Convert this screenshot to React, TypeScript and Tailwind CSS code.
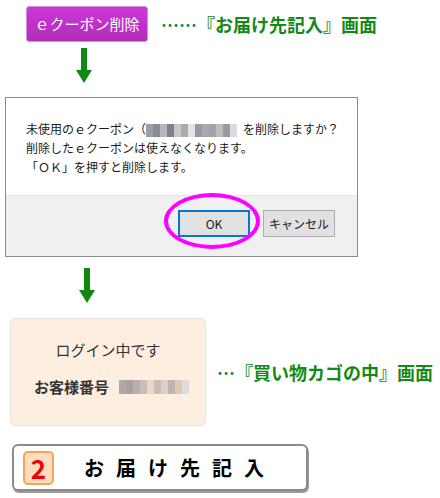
const jp = "font-['Noto_Sans_CJK_JP','Noto_Sans',sans-serif]";

const DownArrow: React.FC<{ className?: string }> = ({ className }) => (
  <svg width="16" height="35" viewBox="0 0 16 35" className={className}>
    <rect x="5" y="0" width="6" height="23" fill="#0f8a0f" />
    <polygon points="0,22 16,22 8,35" fill="#0f8a0f" />
  </svg>
);

const Blur: React.FC<{ colors: string[]; className?: string }> = ({ colors, className }) => (
  <span className={"inline-flex h-[13px] align-middle " + (className ?? "")}>
    {colors.map((c, i) => (
      <span key={i} className="h-full w-[7px]" style={{ background: c }} />
    ))}
  </span>
);

const CouponRow: React.FC = () => (
  <div className="flex items-center pl-[26px] pt-[6px]">
    <div className="flex h-[36px] w-[122px] items-center justify-center rounded-[3px] border border-[#d38fd8] bg-gradient-to-b from-[#cc38d8] to-[#b22cb8] text-[15px] text-white">
      ｅクーポン削除
    </div>
    <div className="ml-[13px] text-[18px] font-bold text-[#138a13]">……『お届け先記入』画面</div>
  </div>
);

const ConfirmDialog: React.FC = () => (
  <div className="ml-[5px] w-[353px] border border-[#8c8c8c] bg-white text-[12px] leading-[19px] text-[#1a1a1a]">
    <div className="h-[97px] pl-[20px] pt-[21px]">
      <p>
        未使用のｅクーポン（
        <Blur
          className="mr-[6px]"
          colors={["#9aa0a8", "#8a8c94", "#b4b8bc", "#7c8088", "#c8c8c8", "#a8acb0", "#e4e4e4", "#9a9aa6", "#b0a8a8", "#a0a4b0", "#c0bcbc", "#9c989c", "#d8dce4"]}
        />
        を削除しますか？
      </p>
      <p>削除したｅクーポンは使えなくなります。</p>
      <p>「ＯＫ」を押すと削除します。</p>
    </div>
    <div className="flex h-[61px] justify-end gap-[13px] border-t border-[#e6e6e6] bg-[#f0f0f0] pr-[22px] pt-[14px]">
      <div className="relative">
        <div className="flex h-[27px] w-[72px] items-center justify-center border-2 border-[#0078d7] bg-[#e1e1e1] text-[12px]">
          OK
        </div>
        <div className="pointer-events-none absolute left-[-14px] top-[-17px] h-[56px] w-[96px] rounded-[50%] border-[4px] border-[#ff00ff]" />
      </div>
      <div className="flex h-[27px] w-[72px] items-center justify-center border border-[#adadad] bg-[#e1e1e1] text-[12px]">
        キャンセル
      </div>
    </div>
  </div>
);

const LoginRow: React.FC = () => (
  <div className="flex items-center pl-[10px]">
    <div className="flex h-[108px] w-[196px] flex-col items-center rounded-[5px] border border-[#ebe3dc] bg-[#fdeee0] text-[#333]">
      <div className="mt-[20px] text-[15px]">ログイン中です</div>
      <div className="mt-[14px] flex w-full items-center pl-[23px]">
        <span className="text-[15px] font-bold">お客様番号</span>
        <Blur
          className="ml-[10px] h-[14px]"
          colors={["#b0a8a4", "#a8a09c", "#b8b0ac", "#c8c0b8", "#e8d8c8", "#c8bcb4", "#d8d0cc", "#c0b4ac", "#e0c8b0", "#dcdcdc"]}
        />
      </div>
    </div>
    <div className="ml-[11px] text-[18px] font-bold text-[#138a13]">…『買い物カゴの中』画面</div>
  </div>
);

const StepButton: React.FC = () => (
  <div className="ml-[12px] flex h-[47px] w-[296px] items-center rounded-[6px] border-2 border-[#8a8a8a] bg-white shadow-[1px_2px_0_#9a9a9a]">
    <div className="ml-[9px] flex h-[34px] w-[31px] items-center justify-center rounded-[5px] border-2 border-[#f9a25a] bg-[#fedcc0] text-[26px] font-bold text-[#f00000]">
      2
    </div>
    <div className="ml-[30px] text-[20px] font-bold tracking-[12px] text-black">お届け先記入</div>
  </div>
);

export default function App() {
  return (
    <div className={"h-[498px] w-[440px] bg-white " + jp}>
      <CouponRow />
      <DownArrow className="ml-[76px] mt-[6px]" />
      <div className="mt-[14px]">
        <ConfirmDialog />
      </div>
      <DownArrow className="ml-[79px] mt-[11px]" />
      <div className="mt-[15px]">
        <LoginRow />
      </div>
      <div className="mt-[18px]">
        <StepButton />
      </div>
    </div>
  );
}
